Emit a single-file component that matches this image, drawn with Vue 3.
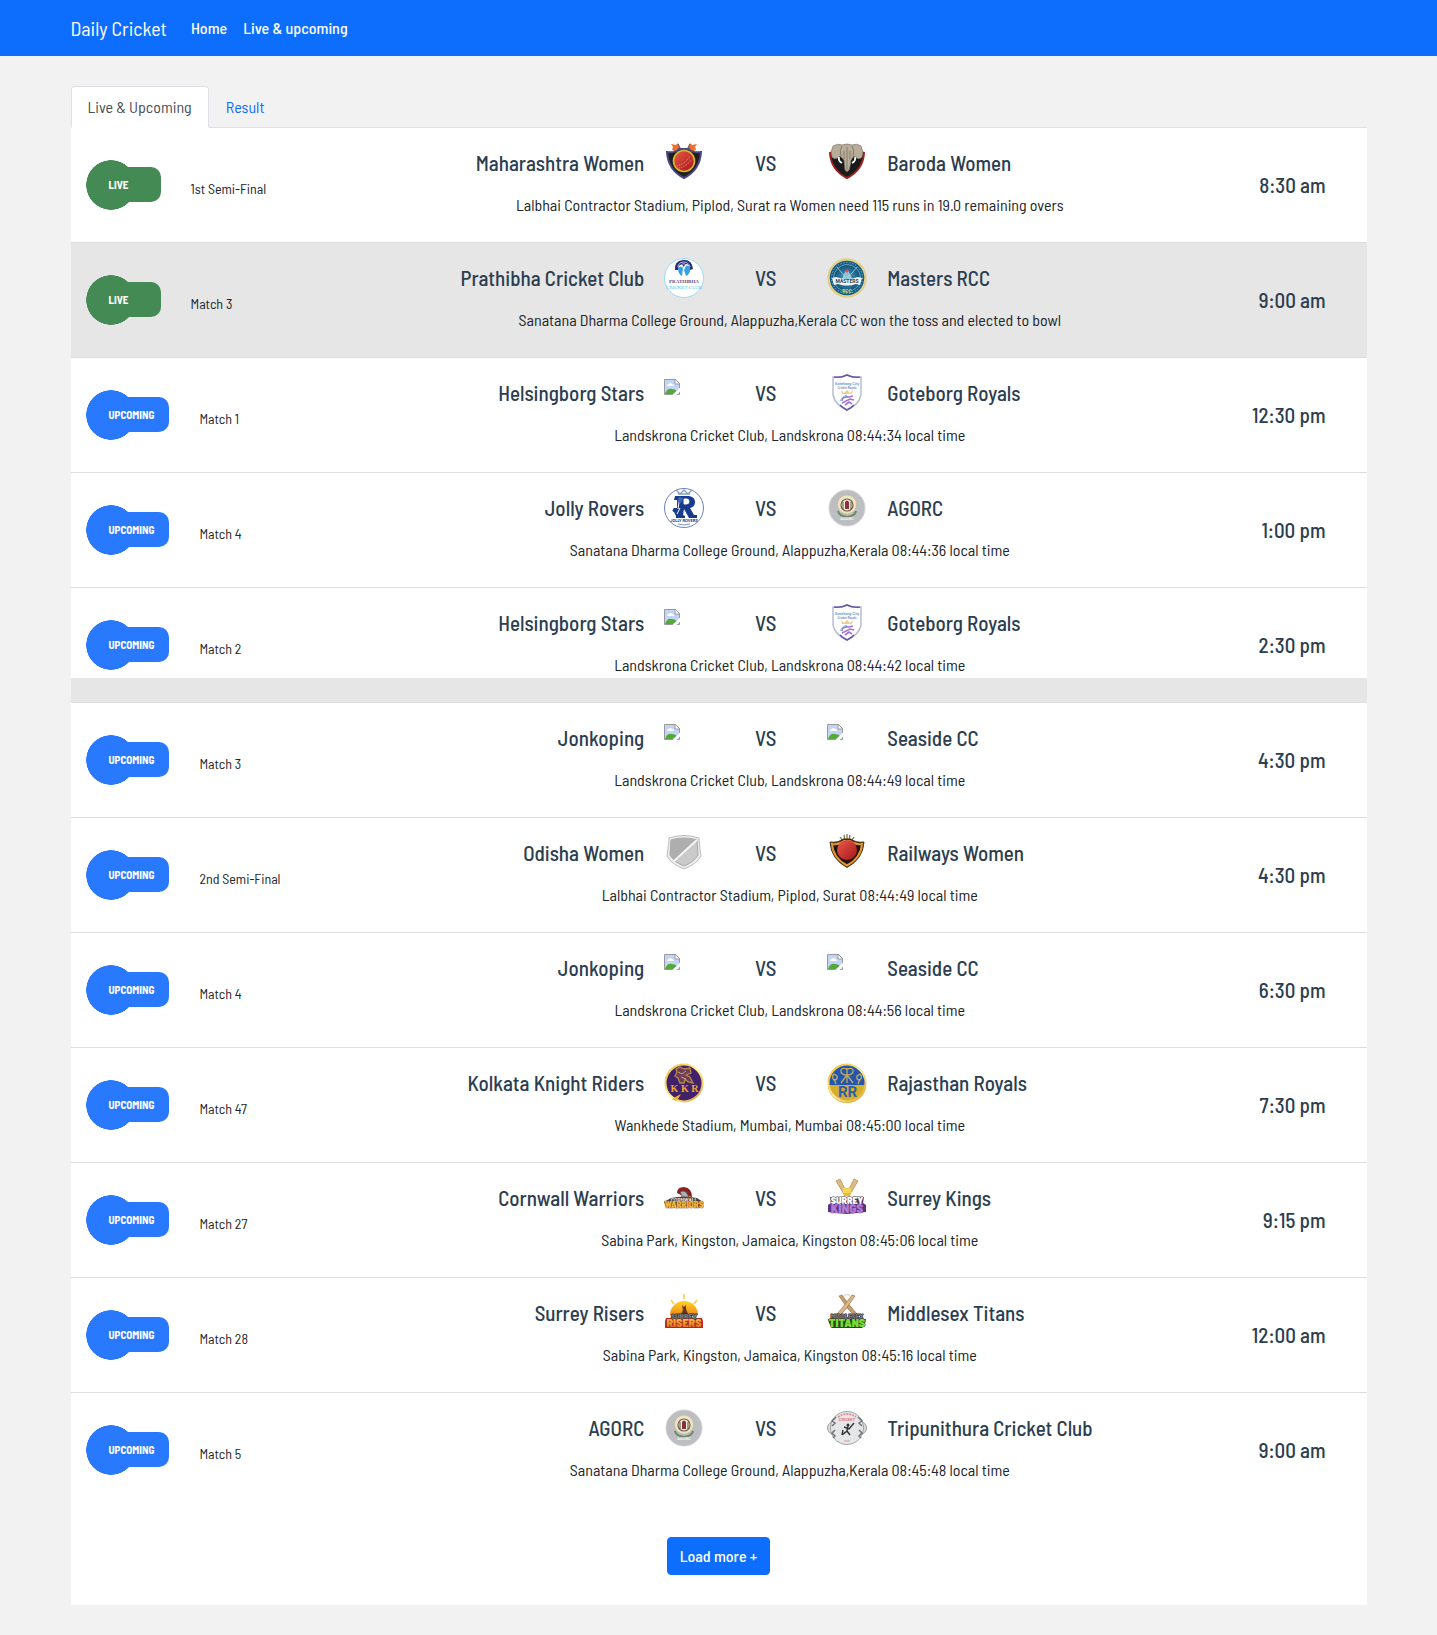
<script setup>
import { ref } from 'vue'

const tab = ref('live')

const rows = [
  ['live', '1st Semi-Final', 'Maharashtra Women', 'maharashtra', 'Baroda Women', 'baroda', 'Lalbhai Contractor Stadium, Piplod, Surat ra Women need 115 runs in 19.0 remaining overs', '8:30 am'],
  ['live', 'Match 3', 'Prathibha Cricket Club', 'prathibha', 'Masters RCC', 'masters', 'Sanatana Dharma College Ground, Alappuzha,Kerala CC won the toss and elected to bowl', '9:00 am', 'active'],
  ['upcoming', 'Match 1', 'Helsingborg Stars', 'missing', 'Goteborg Royals', 'goteborg', 'Landskrona Cricket Club, Landskrona 08:44:34 local time', '12:30 pm'],
  ['upcoming', 'Match 4', 'Jolly Rovers', 'rovers', 'AGORC', 'agorc', 'Sanatana Dharma College Ground, Alappuzha,Kerala 08:44:36 local time', '1:00 pm'],
  ['upcoming', 'Match 2', 'Helsingborg Stars', 'missing', 'Goteborg Royals', 'goteborg', 'Landskrona Cricket Club, Landskrona 08:44:42 local time', '2:30 pm', 'partial'],
  ['upcoming', 'Match 3', 'Jonkoping', 'missing', 'Seaside CC', 'missing', 'Landskrona Cricket Club, Landskrona 08:44:49 local time', '4:30 pm'],
  ['upcoming', '2nd Semi-Final', 'Odisha Women', 'odisha', 'Railways Women', 'railways', 'Lalbhai Contractor Stadium, Piplod, Surat 08:44:49 local time', '4:30 pm'],
  ['upcoming', 'Match 4', 'Jonkoping', 'missing', 'Seaside CC', 'missing', 'Landskrona Cricket Club, Landskrona 08:44:56 local time', '6:30 pm'],
  ['upcoming', 'Match 47', 'Kolkata Knight Riders', 'kkr', 'Rajasthan Royals', 'rr', 'Wankhede Stadium, Mumbai, Mumbai 08:45:00 local time', '7:30 pm'],
  ['upcoming', 'Match 27', 'Cornwall Warriors', 'warriors', 'Surrey Kings', 'kings', 'Sabina Park, Kingston, Jamaica, Kingston 08:45:06 local time', '9:15 pm'],
  ['upcoming', 'Match 28', 'Surrey Risers', 'risers', 'Middlesex Titans', 'titans', 'Sabina Park, Kingston, Jamaica, Kingston 08:45:16 local time', '12:00 am'],
  ['upcoming', 'Match 5', 'AGORC', 'agorc', 'Tripunithura Cricket Club', 'tripunithura', 'Sanatana Dharma College Ground, Alappuzha,Kerala 08:45:48 local time', '9:00 am']
]

const matches = rows.map(([status, label, home, homeLogo, away, awayLogo, note, time, highlight], id) => ({
  id, status, label, home, homeLogo, away, awayLogo, note, time, highlight
}))
</script>

<template>
  <svg class="gradients" aria-hidden="true">
    <defs>
      <linearGradient id="g-red" x1="0" y1="0" x2="1" y2="1"><stop offset="0" stop-color="#e85a4a" /><stop offset="1" stop-color="#a8161a" /></linearGradient>
      <linearGradient id="g-gold" x1="0" y1="0" x2="1" y2="1"><stop offset="0" stop-color="#f0b828" /><stop offset=".5" stop-color="#fff0a0" /><stop offset="1" stop-color="#e0a030" /></linearGradient>
      <linearGradient id="g-sun" x1="0" y1="0" x2="0" y2="1"><stop offset="0" stop-color="#ffd426" /><stop offset="1" stop-color="#f08a1c" /></linearGradient>
      <linearGradient id="g-fire" x1="0" y1="0" x2="0" y2="1"><stop offset="0" stop-color="#ffd84a" /><stop offset="1" stop-color="#e0601c" /></linearGradient>
      <radialGradient id="g-teal"><stop offset="0" stop-color="#4fa3c4" /><stop offset="1" stop-color="#11527a" /></radialGradient>
    </defs>
  </svg>

  <svg class="sprite" aria-hidden="true">
    <symbol id="maharashtra" viewBox="0 0 40 40">
      <path d="M7 1l5 1 2-2 3 6-4 3-5-2 1-3zM33 1l-5 1-2-2-3 6 4 3 5-2-1-3z" fill="#f0702a" />
      <path d="M14 1l3 6M26 1l-3 6" stroke="#555" fill="none" />
      <path d="M3 9q9 1 12-3h10q3 4 12 3-1 18-17 26Q4 27 3 9z" fill="#1d201c" stroke="#4a468c" stroke-width="2" />
      <circle cx="20" cy="18" r="10.500" fill="url(#g-red)" stroke="#d9b52c" stroke-width="1.600" />
      <path d="M13 23q8-2 13-10M15 25q8-2 13-9" stroke="#f0a090" stroke-width=".8" fill="none" stroke-dasharray="1 1" />
    </symbol>

    <symbol id="baroda" viewBox="0 0 40 40">
      <path d="M3 10q17-6 34 0-1 17-17 25Q4 27 3 10z" fill="#191a1c" stroke="#a01e1e" stroke-width="2" />
      <path d="M6 3q5-3 9-1 5-2 10 0 5-2 9 1 3 6 1 11-3 4-8-1l-3 4q-1 8-2 10-2 3-4 0l-1-10-4-4q-5 5-8 1-2-5 1-11z" fill="#b8ad98" stroke="#81786a" stroke-width=".7" />
      <path d="M20 4v23M15 3q-3 5-1 10M25 3q3 5 1 10M17 8v8M23 8v8" stroke="#7c725f" stroke-width=".8" fill="none" />
      <path d="M12 14q-1 4 3 6M28 14q1 4-3 6" stroke="#fff" stroke-width="1.800" fill="none" />
    </symbol>

    <symbol id="prathibha" viewBox="0 0 40 40">
      <circle cx="20" cy="20" r="19.500" fill="#fff" stroke="#9cdcf4" />
      <path d="M11 12q-1-9 8-10 9-1 10 9l-3 1q0-5-3-6-3 0-3 4-1-4-4-3-2 1-2 5z" fill="#292d78" />
      <path d="M14 9q0-4 5-5 6 0 7 5M17 7q3-3 6 1" stroke="#b4bbe2" fill="none" />
      <path d="M14 10q3-3 5 0l-1 8q-4-2-4-8zM22 8q5-1 4 5-1 4-4 5l-2-6z" fill="#34a0e4" />
      <text x="20" y="25" text-anchor="middle" font-size="5" font-weight="700" font-family="Liberation Serif, serif" fill="#53538c">PRATHIBHA</text>
      <text x="20" y="31" text-anchor="middle" font-size="5" font-family="Liberation Serif, serif" fill="#54bde9">CRICKET CLUB</text>
    </symbol>

    <symbol id="masters" viewBox="0 0 40 40">
      <circle cx="20" cy="20" r="18.500" fill="#175e86" stroke="#e2d18c" stroke-width="2.500" />
      <circle cx="20" cy="20" r="13.500" fill="url(#g-teal)" stroke="#86bccd" stroke-width=".7" />
      <circle cx="20" cy="20" r="15.500" fill="none" stroke="#a8cbbb" stroke-dasharray="1 2" />
      <path d="M10 9l9 11M30 9l-9 11M19 13l-4 9h10l-4-9z" fill="#8cc5da" stroke="#b8deea" stroke-width=".7" />
      <circle cx="20" cy="13" r="1.600" fill="#e34c47" />
      <path d="M5 20l4-1q11 4 22 0l4 1-2 7-4-1q-9 3-18 0l-4 1z" fill="#f3f5f4" />
      <text x="20" y="25" text-anchor="middle" font-size="5" font-weight="700" font-family="Roboto, sans-serif" fill="#23485c">MASTERS</text>
      <text x="20" y="34.500" text-anchor="middle" font-size="5" font-weight="700" font-family="Roboto, sans-serif" fill="#cfd07c">RCC</text>
    </symbol>

    <symbol id="missing" viewBox="0 0 40 40">
      <path d="M.5 6.500h11l4 4v11H.5z" fill="#c3d5f5" stroke="#9a9a9a" />
      <path d="M11 6v5h5z" fill="#fff" stroke="#9a9a9a" />
      <path d="M3 13q0-2 2-2 1-2 3 0 2 0 2 2z" fill="#fff" />
      <path d="M1 21q2-6 7-5 3 0 5 2l-4 3z" fill="#54a938" />
      <path d="M8 22.500L16.500 14v4L12 22.500z" fill="#fff" />
    </symbol>

    <symbol id="goteborg" viewBox="0 0 40 40">
      <path d="M6 4q7 1 14-2 7 3 14 2v18q-2 10-14 15Q8 32 6 22z" fill="#fff" stroke="#b9bcd6" stroke-width="1.500" />
      <path d="M7 4q7 1 13-2 6 3 13 2M13 32q3 3 7 5 4-2 7-5" stroke="#6558aa" stroke-width="1.600" fill="none" />
      <text x="20" y="12" text-anchor="middle" font-size="4" font-family="Roboto, sans-serif" fill="#5993cb">Goteborg City</text>
      <text x="20" y="16" text-anchor="middle" font-size="3" font-family="Roboto, sans-serif" fill="#6b86bd">Cricket Royals</text>
      <path d="M14 17l3 3 3-3 3 3 3-3-1 4H15z" fill="#f1cd8c" />
      <path d="M15 28q0-5 7-4l4-1M15 30l8-4 4 1M18 32l4-3 3 2" stroke="#a173d8" stroke-width="1.600" fill="none" />
      <path d="M13 28q2-5 7-6" stroke="#5ad0d8" fill="none" />
    </symbol>

    <symbol id="rovers" viewBox="0 0 40 40">
      <circle cx="20" cy="20" r="19.500" fill="#fff" stroke="#6b83b8" />
      <path d="M12 2l4 4 4-4 4 4 4-4M14 6h12" stroke="#8b9dc6" stroke-width="1.300" fill="none" />
      <path d="M11 8h14q6 1 6 6 0 5-5 6l4 7h3v3h-8l-5-9-1 6 2 1v2h-9v-2l-2-4q-3-1 0-4h3v-8h-3z" fill="#173b8e" />
      <path d="M20 11h3q2 0 2 3 0 2-3 2h-2zM15 14l-1 7M16 20l-3 6" fill="#fff" stroke="#fff" />
      <path d="M15 9l4 1-2 5-4-1z" fill="#4267b4" />
      <text x="20" y="34" text-anchor="middle" font-size="4" font-weight="700" font-family="Roboto, sans-serif" fill="#1d3f8e">JOLLY ROVERS</text>
      <path d="M14 36q6 2 12 0" stroke="#7f94c4" fill="none" />
    </symbol>

    <symbol id="agorc" viewBox="0 0 40 40">
      <circle cx="20" cy="20" r="18" fill="#bcbec2" stroke="#d2d3d6" />
      <path d="M11 23q1 5 9 6 8-1 9-6" fill="none" stroke="#6e8a6a" stroke-width="2" />
      <circle cx="20" cy="16.500" r="9.500" fill="#eee3c2" stroke="#c9b98c" stroke-dasharray="2 1" />
      <circle cx="20" cy="17" r="6" fill="#f4efdf" stroke="#6b6352" stroke-width="1.200" />
      <path d="M18 14q2-3 4 0v7h-4z" fill="#8c3035" />
      <path d="M16 14v7M24 14v7" stroke="#5a5240" />
      <text x="20" y="32" text-anchor="middle" font-size="4" font-weight="700" font-family="Roboto, sans-serif" fill="#f4f4f4">AGORC</text>
    </symbol>

    <symbol id="odisha" viewBox="0 0 40 40">
      <path d="M5 5q15-5 30 0 0 4 2 18-4 8-17 13Q7 31 3 23 5 9 5 5z" fill="#ececec" stroke="#bdbdbd" />
      <path d="M7 7q13-4 26 0l1 15q-4 7-14 11Q10 29 6 22z" fill="#cacaca" stroke="#a6a6a6" />
      <path d="M7 7q13-4 25 0L10 27l-4-5z" fill="#aeaeae" />
      <path d="M33 7L10 28" stroke="#f6f6f6" stroke-width="1.800" />
    </symbol>

    <symbol id="railways" viewBox="0 0 40 40">
      <path d="M13 4l2 3M17 2l1 5M20 1v5M23 2l-1 5M27 4l-2 3M13 8q7-3 14 0" stroke="#77775a" stroke-width="1.300" fill="none" />
      <path d="M3 9q8 1 13-3h8q5 4 13 3-1 17-17 25.500Q4 26 3 9z" fill="#3a1414" stroke="#5a3a16" stroke-width="1" />
      <path d="M5 11q7 1 12-3h6q5 4 12 3-1 14-15 21.500Q6 25 5 11z" fill="#251012" stroke="#dc9a35" stroke-width="2" />
      <circle cx="20" cy="17" r="10" fill="url(#g-red)" />
    </symbol>

    <symbol id="kkr" viewBox="0 0 40 40">
      <circle cx="20" cy="20" r="18.500" fill="#40216a" stroke="url(#g-gold)" stroke-width="2" />
      <path d="M12 6l4-2 4 2 6-1 1 5-5 2 4 2 3 6-5-1-3-3-1 4h-4l-2-5-3-2 2-4z" fill="#6b3d5c" stroke="#b98745" stroke-width="1.300" />
      <path d="M14 9l4 2 4-3M17 14l5 2" stroke="#d9a54f" fill="none" />
      <text x="20.500" y="29" text-anchor="middle" font-size="10" font-weight="700" font-family="Liberation Serif, serif" fill="#f0a630">K K R</text>
      <path d="M8 36q5-3 9-5-2 4-5 7z" fill="#f2b82e" />
    </symbol>

    <symbol id="rr" viewBox="0 0 40 40">
      <circle cx="20" cy="20" r="19" fill="#2456ae" />
      <path d="M1 22h38a19 18 0 0 1-38 0z" fill="#d5ae2c" />
      <circle cx="20" cy="20" r="18.500" fill="none" stroke="url(#g-gold)" stroke-width="2" />
      <path d="M20 5v15M20 6q7-2 6 3-1 3-6 3l6 8M20 6q-7-2-6 3 1 3 6 3l-6 8M7 11q-3 3 0 6 4 0 3-4l-3-2zM33 11q3 3 0 6-4 0-3-4zM7 16l2 5M33 16l-2 5" stroke="#c2ad60" stroke-width="1.300" fill="none" />
      <text x="20.500" y="34" text-anchor="middle" font-size="15" font-weight="700" font-family="Roboto, sans-serif" fill="#2f60aa">RR</text>
    </symbol>

    <symbol id="warriors" viewBox="0 0 40 40">
      <path d="M13 15q0-6 7-6 8 1 8 10l-5-1-2-4-4 3z" fill="#8b211d" />
      <path d="M16 14q5-3 8 3l1 5h-9l2-4z" fill="#aab1b5" stroke="#4d4d50" stroke-width=".8" />
      <path d="M7 20q13-3 26 0l6 4-2 6q-17-4-34 0l-3-6z" fill="#51423a" />
      <text x="20" y="24" text-anchor="middle" font-size="5" font-weight="900" font-family="Roboto, sans-serif" fill="#ded9ce">CORNWALL</text>
      <text x="20" y="30" text-anchor="middle" font-size="9" font-weight="900" font-family="Barlow Semi Condensed, sans-serif" fill="#eeb33c" stroke="#5d3516" stroke-width=".7" paint-order="stroke">WARRIORS</text>
    </symbol>

    <symbol id="kings" viewBox="0 0 40 40">
      <path d="M9 3l4-2 6 12-1 5zM31 3l-4-2-6 12 1 5z" fill="#dfbd82" stroke="#ae8552" stroke-width=".7" />
      <circle cx="20" cy="14" r="4" fill="#e1bc38" />
      <path d="M16 11l2-2 2 2 2-2 2 2v4h-8z" fill="#f5d84f" />
      <path d="M3 19h34l-1 6 3 2v7l-19 2-19-2v-7l3-2z" fill="#57327e" />
      <text x="20" y="26" text-anchor="middle" font-size="10" font-weight="900" font-family="Barlow Semi Condensed, sans-serif" fill="#fff" stroke="#3d3c40" stroke-width="1" paint-order="stroke">SURREY</text>
      <text x="20" y="35" text-anchor="middle" font-size="13" font-weight="900" font-family="Barlow Semi Condensed, sans-serif" fill="#b07ad2" stroke="#57327e" stroke-width=".7" paint-order="stroke">KINGS</text>
    </symbol>

    <symbol id="risers" viewBox="0 0 40 40">
      <path d="M20 1v5M7 7l3 4M33 7l-3 4" stroke="#f2d255" stroke-width="1.700" />
      <path d="M6 22a14 14 0 0 1 28 0z" fill="url(#g-sun)" />
      <path d="M18 12l2 2 2-2v4l2 5h-7l2-4z" fill="#65351e" />
      <path d="M2 25h36l1 3v7H1v-7z" fill="#b72e24" />
      <text x="20" y="26" text-anchor="middle" font-size="8" font-weight="900" font-family="Barlow Semi Condensed, sans-serif" fill="#77736e" stroke="#222" stroke-width="1" paint-order="stroke">SURREY</text>
      <text x="20" y="34" text-anchor="middle" font-size="12" font-weight="900" font-family="Barlow Semi Condensed, sans-serif" fill="url(#g-fire)" stroke="#9b2020" stroke-width="1" paint-order="stroke">RISERS</text>
    </symbol>

    <symbol id="titans" viewBox="0 0 40 40">
      <path d="M12 3l3-1 9 12 6 7-3 1-6-6z" fill="#c69d6c" stroke="#9b7650" stroke-width=".7" />
      <path d="M28 3l-3-1-9 12-6 7 3 1 6-6z" fill="#dbb88a" stroke="#9b7650" stroke-width=".7" />
      <path d="M17 3q3-3 6 0" stroke="#ddd" fill="none" stroke-width="1.500" />
      <path d="M1 26h38l-1 4-3 5H5l-3-5z" fill="#334526" />
      <text x="20" y="26" text-anchor="middle" font-size="7" font-weight="900" font-family="Barlow Semi Condensed, sans-serif" fill="#77757b" stroke="#25242b" stroke-width="1" paint-order="stroke">MIDDLESEX</text>
      <text x="20" y="34" text-anchor="middle" font-size="12" font-weight="900" font-family="Barlow Semi Condensed, sans-serif" fill="#7bdd34" stroke="#28471b" stroke-width="1" paint-order="stroke">TITANS</text>
    </symbol>

    <symbol id="tripunithura" viewBox="0 0 40 40">
      <circle cx="7" cy="20" r="6.500" fill="#d9dbdc" stroke="#9a9b9d" />
      <circle cx="33" cy="20" r="6.500" fill="#d9dbdc" stroke="#9a9b9d" />
      <circle cx="20" cy="20" r="16.500" fill="#e4e6e7" stroke="#a3a4a6" />
      <path d="M9 9l-4 4 3 2-3 3M31 9l4 4-3 2 3 3M8 22l-3 3 3 3-2 2M32 22l3 3-3 3 2 2" stroke="#727375" stroke-width="1.500" fill="none" />
      <path d="M11 9q9-6 18 0" stroke="#e38f93" stroke-width="1.800" stroke-dasharray="2 1" fill="none" />
      <text x="20" y="13" text-anchor="middle" font-size="4" font-weight="700" font-family="Roboto, sans-serif" fill="#e17980">CRICKET</text>
      <circle cx="21" cy="17" r="1.500" fill="#333" />
      <path d="M27 15l-5 6-5-2M21 18l-1 5-5 4M20 23l3 4M16 22l-1 5" stroke="#333" stroke-width="1.400" fill="none" />
      <path d="M17 33h6" stroke="#df9a9d" />
    </symbol>
  </svg>

  <header class="navbar">
    <nav class="container nav">
      <a class="brand" href="#">Daily Cricket</a>
      <a class="nav-link" href="#">Home</a>
      <a class="nav-link" href="#">Live &amp; upcoming</a>
    </nav>
  </header>

  <main class="container main">
    <div class="tabs" role="tablist">
      <button class="tab" :class="{ selected: tab === 'live' }" type="button" role="tab" :aria-selected="tab === 'live'" @click="tab = 'live'">Live &amp; Upcoming</button>
      <button class="tab" :class="{ selected: tab === 'result' }" type="button" role="tab" :aria-selected="tab === 'result'" @click="tab = 'result'">Result</button>
    </div>

    <section class="panel">
      <ul class="matches">
        <li v-for="m in matches" :key="m.id" class="match" :class="m.highlight">
          <div class="status">
            <span class="badge" :class="m.status"><span class="badge-text">{{ m.status }}</span></span>
            <span class="label">{{ m.label }}</span>
          </div>
          <div class="fixture">
            <div class="teams">
              <span class="team home">{{ m.home }}</span>
              <svg class="logo"><use :href="'#' + m.homeLogo" /></svg>
              <span class="vs">VS</span>
              <svg class="logo"><use :href="'#' + m.awayLogo" /></svg>
              <span class="team">{{ m.away }}</span>
            </div>
            <p class="note">{{ m.note }}</p>
          </div>
          <time class="time">{{ m.time }}</time>
        </li>
      </ul>
      <div class="more">
        <button class="load" type="button">Load more +</button>
      </div>
    </section>
  </main>
</template>

<style>
body {
  background: #f2f2f2;
}
</style>

<style scoped>
.gradients {
  position: absolute;
  width: 0;
  height: 0;
}

.sprite {
  display: none;
}

.navbar,
.main {
  font-family: 'Barlow Semi Condensed', 'Roboto Condensed', Roboto, sans-serif;
  font-size: 16px;
  line-height: 24px;
  color: #212529;
}

.container {
  box-sizing: border-box;
  max-width: 1320px;
  margin: 0 auto;
  padding: 0 12px;
}

.navbar {
  background: #0d6efd;
}

.nav {
  display: flex;
  align-items: center;
  height: 56px;
}

.nav a {
  color: #fff;
  text-decoration: none;
}

.brand {
  margin-right: 16px;
  font-size: 20px;
}

.nav-link {
  padding: 8px;
  font-weight: 500;
}

.main {
  padding-top: 30px;
  padding-bottom: 30px;
}

.tabs {
  display: flex;
  border-bottom: 1px solid #dee2e6;
}

.tab {
  margin-bottom: -1px;
  padding: 8px 16px;
  border: 1px solid transparent;
  border-radius: 4px 4px 0 0;
  background: transparent;
  color: #0d6efd;
  font: inherit;
  cursor: pointer;
}

.tab.selected {
  border-color: #dee2e6 #dee2e6 #fff;
  background: #fff;
  color: #495057;
}

.panel {
  background: #fff;
}

.matches {
  margin: 0;
  padding: 0;
  list-style: none;
}

.match {
  box-sizing: border-box;
  display: grid;
  grid-template-columns: 25fr 61fr 14fr;
  min-height: 115px;
  border-bottom: 1px solid #dedede;
}

.match:last-child {
  border-bottom-color: transparent;
}

.active {
  background: #e6e6e6;
}

.partial {
  background: linear-gradient(#fff 90px, #e6e6e6 90px);
}

.status {
  display: flex;
  align-items: center;
  gap: 30px;
  padding-left: 15px;
}

.badge {
  display: flex;
  align-items: flex-start;
  box-sizing: border-box;
  min-width: 75px;
  height: 50px;
  padding-top: 7px;
  background: radial-gradient(circle at 25px 25px, var(--tone) 24.5px, transparent 25px);
}

.badge-text {
  flex: 1;
  margin-left: 16px;
  padding: 0 15px 0 7px;
  border-radius: 10px;
  background: var(--tone);
  color: #fff;
  font-size: 11px;
  font-weight: 700;
  line-height: 35px;
  text-transform: uppercase;
}

.live {
  --tone: #438a55;
}

.upcoming {
  --tone: #2979ff;
}

.label {
  padding-top: 8px;
  font-size: 14px;
}

.fixture {
  padding-top: 15px;
}

.teams {
  display: grid;
  grid-template-columns: 1fr 40px 123px 40px 1fr;
  align-items: center;
  padding-right: 48px;
  color: #2c3e50;
  font-size: 21px;
  font-weight: 500;
}

.logo {
  width: 40px;
  height: 40px;
}

.team {
  padding: 0 20px;
  white-space: nowrap;
}

.home {
  text-align: right;
}

.vs {
  text-align: center;
}

.note {
  margin: 10px 0 0;
  text-align: center;
}

.time {
  align-self: center;
  padding-right: 41px;
  color: #2c3e50;
  font-size: 21px;
  font-weight: 500;
  text-align: right;
}

.more {
  display: flex;
  justify-content: center;
  padding: 29px 0 30px;
}

.load {
  padding: 6px 12px;
  border: 1px solid #0d6efd;
  border-radius: 4px;
  background: #0d6efd;
  color: #fff;
  font: inherit;
  font-weight: 500;
  cursor: pointer;
}
</style>
